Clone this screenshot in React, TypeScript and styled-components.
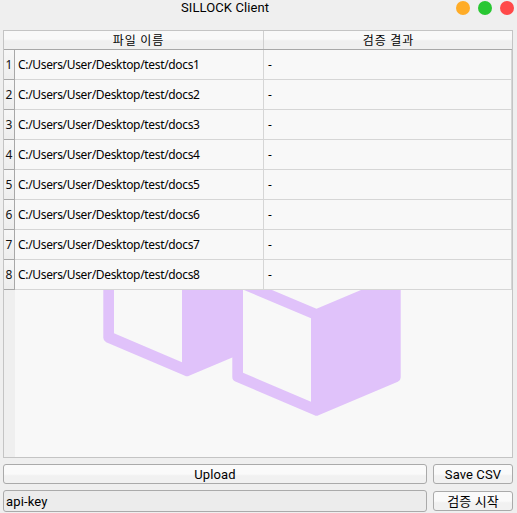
import React from 'react';
import styled, { createGlobalStyle } from 'styled-components';

const GlobalStyle = createGlobalStyle`
  * { box-sizing: border-box; }
  html, body { margin: 0; padding: 0; background: #efefef; overflow: hidden; }
`;

const Window = styled.div`
  width: 517px;
  height: 513px;
  display: flex;
  flex-direction: column;
  padding: 0 4px 0 3px;
  background: #efefef;
  color: #000;
  font-family: 'Noto Sans', 'Noto Sans CJK KR', sans-serif;
  font-size: 12px;
  overflow: hidden;
`;

const TitleBar = styled.header`
  flex: none;
  height: 30px;
  display: grid;
  grid-template-columns: 178px 1fr auto;
`;

const Title = styled.h1`
  grid-column: 2;
  margin: 0;
  font: 400 13px/16px 'Roboto', sans-serif;
  letter-spacing: 0.1px;
`;

const WindowControls = styled.div`
  display: flex;
  gap: 8px;
  padding-top: 1px;
  margin-right: -1px;
`;

const Dot = styled.span<{ $color: string }>`
  width: 14px;
  height: 14px;
  border-radius: 50%;
  background: ${(p) => p.$color};
`;

const Table = styled.section`
  flex: none;
  width: 510px;
  height: 428px;
  display: flex;
  flex-direction: column;
  border: 1px solid #c4c4c4;
  background: #f8f8f8;
`;

const HeaderRow = styled.div`
  flex: none;
  height: 19px;
  display: grid;
  grid-template-columns: 260px 1fr;
  grid-template-rows: 18px;
  border-bottom: 1px solid #a8a8a8;
  background: linear-gradient(#f9f9f9 0 45%, #f0f0f0 55% 100%);
`;

const HeaderCell = styled.div`
  font: 400 12px/18px 'Noto Sans CJK KR', sans-serif;
  letter-spacing: 0.9px;
  text-align: center;
  padding-left: 10px;
  border-right: 1px solid #d0d0d0;
  &:last-child { padding-left: 1px; border-right: 0; }
`;

const Row = styled.div`
  flex: none;
  height: 30px;
  display: grid;
  grid-template-columns: 11px 249px 1fr;
  grid-template-rows: 30px;
`;

const RowNumber = styled.div`
  border-right: 1px solid #a8a8a8;
  border-bottom: 1px solid #a8a8a8;
  background: linear-gradient(#f7f7f7, #ededed);
  line-height: 30px;
  text-align: center;
  color: #111;
`;

const Cell = styled.div`
  padding-left: 3px;
  border-right: 1px solid #d6d6d6;
  border-bottom: 1px solid #d6d6d6;
  line-height: 29px;
  white-space: nowrap;
  letter-spacing: -0.33px;
  &:last-child { padding-left: 4px; }
`;

const EmptyArea = styled.div`
  flex: 1;
  display: grid;
  grid-template-columns: 11px 1fr;
`;

const Gutter = styled.div`
  background: #efefef;
`;

const Logo = styled.svg`
  display: block;
  width: 497px;
  height: 167px;
`;

const Footer = styled.footer`
  display: grid;
  grid-template-columns: 424px 80px;
  column-gap: 6px;
  row-gap: 6px;
  align-items: center;
  padding-top: 6px;
`;

const Button = styled.button`
  height: 20px;
  padding: 0;
  border: 1px solid #aaa;
  border-radius: 3px;
  background: linear-gradient(#fafafa 0 50%, #f1f1f1 60% 100%);
  color: #000;
  font: 400 13px/17px 'Roboto', 'Noto Sans CJK KR', sans-serif;
  letter-spacing: 0.1px;
`;

const KeyInput = styled.input`
  width: 100%;
  height: 22px;
  padding: 0 2px;
  border: 1px solid #aaa;
  border-radius: 3px;
  outline: 0;
  background: #ececec;
  color: #000;
  font: 400 13px/18px 'Roboto', sans-serif;
  letter-spacing: 0.15px;
`;

const files = [1, 2, 3, 4, 5, 6, 7, 8].map((n) => `C:/Users/User/Desktop/test/docs${n}`);

const CubesLogo = () => (
  <Logo viewBox="15 290 497 167" aria-hidden="true">
    <path
      fill="#e0c2fa"
      fillRule="evenodd"
      d="M103.3 290H243V353L189 375.8Q187 376.9 185 375.8L106.2 342.2Q103.3 340.8 103.3 337.8ZM114 290V333.2L182 362.3V290Z"
    />
    <path fill="#f8f8f8" d="M243 290H362L316.5 309L311 402L243 373Z" />
    <path
      fill="#e0c2fa"
      fillRule="evenodd"
      d="M232.3 290H272L316.5 308.7L361 290H400.7V377.5Q400.7 380.5 397.8 381.8L318.5 415.2Q316.5 416.2 314.5 415.2L235.3 381.5Q232.3 380.1 232.3 377ZM243 290V372.7L311 401.7V318.2L244 290Z"
    />
  </Logo>
);

export default function App() {
  return (
    <>
      <GlobalStyle />
      <Window>
        <TitleBar>
          <Title>SILLOCK Client</Title>
          <WindowControls>
            <Dot $color="#ffac27" />
            <Dot $color="#28c732" />
            <Dot $color="#ff4949" />
          </WindowControls>
        </TitleBar>
        <Table>
          <HeaderRow>
            <HeaderCell>파일 이름</HeaderCell>
            <HeaderCell>검증 결과</HeaderCell>
          </HeaderRow>
          {files.map((file, i) => (
            <Row key={file}>
              <RowNumber>{i + 1}</RowNumber>
              <Cell>{file}</Cell>
              <Cell>-</Cell>
            </Row>
          ))}
          <EmptyArea>
            <Gutter />
            <CubesLogo />
          </EmptyArea>
        </Table>
        <Footer>
          <Button>Upload</Button>
          <Button>Save CSV</Button>
          <KeyInput defaultValue="api-key" />
          <Button>검증 시작</Button>
        </Footer>
      </Window>
    </>
  );
}
